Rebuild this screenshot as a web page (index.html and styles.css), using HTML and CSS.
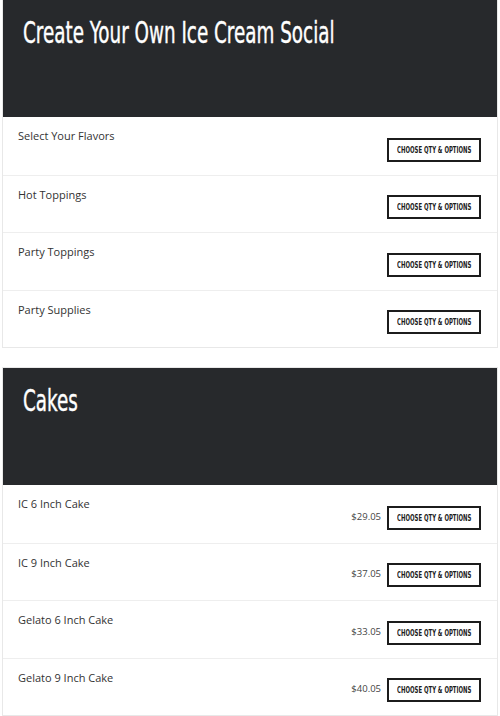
FILE: index.html
```html
<!DOCTYPE html>
<html>
<head>
<meta charset="utf-8">
<link rel="stylesheet" href="styles.css">
</head>
<body>
<div class="page">
  <section class="card">
    <header class="card-head"><h2 class="card-title"><span class="squeeze">Create Your Own Ice Cream Social</span></h2></header>
    <div class="row"><div class="row-name">Select Your Flavors</div><div class="row-act"><button class="btn"><span class="btn-label">CHOOSE QTY &amp; OPTIONS</span></button></div></div>
    <div class="row"><div class="row-name">Hot Toppings</div><div class="row-act"><button class="btn"><span class="btn-label">CHOOSE QTY &amp; OPTIONS</span></button></div></div>
    <div class="row"><div class="row-name">Party Toppings</div><div class="row-act"><button class="btn"><span class="btn-label">CHOOSE QTY &amp; OPTIONS</span></button></div></div>
    <div class="row"><div class="row-name">Party Supplies</div><div class="row-act"><button class="btn"><span class="btn-label">CHOOSE QTY &amp; OPTIONS</span></button></div></div>
  </section>
  <section class="card">
    <header class="card-head"><h2 class="card-title"><span class="squeeze">Cakes</span></h2></header>
    <div class="row"><div class="row-name">IC 6 Inch Cake</div><div class="row-act"><span class="price">$29.05</span><button class="btn"><span class="btn-label">CHOOSE QTY &amp; OPTIONS</span></button></div></div>
    <div class="row"><div class="row-name">IC 9 Inch Cake</div><div class="row-act"><span class="price">$37.05</span><button class="btn"><span class="btn-label">CHOOSE QTY &amp; OPTIONS</span></button></div></div>
    <div class="row"><div class="row-name">Gelato 6 Inch Cake</div><div class="row-act"><span class="price">$33.05</span><button class="btn"><span class="btn-label">CHOOSE QTY &amp; OPTIONS</span></button></div></div>
    <div class="row"><div class="row-name">Gelato 9 Inch Cake</div><div class="row-act"><span class="price">$40.05</span><button class="btn"><span class="btn-label">CHOOSE QTY &amp; OPTIONS</span></button></div></div>
  </section>
</div>
</body>
</html>
```
FILE: styles.css
```css
html, body { margin: 0; padding: 0; background: #fff; }
body { font-family: "Open Sans", "Liberation Sans", sans-serif; color: #333; }
.page { padding: 0 2px; display: flex; flex-direction: column; gap: 19px; }
.card { border: 1px solid #e8e8e8; border-top: none; background: #fff; }
.card + .card { border-top: 1px solid #e8e8e8; }
.card-head { background: #27292c; height: 117px; box-sizing: border-box; padding: 15px 20px 0; }
.card-title { margin: 0; color: #fff; font-family: "DejaVu Sans Condensed", "DejaVu Sans", sans-serif; font-weight: normal; font-size: 30px; line-height: 36px; white-space: nowrap; }
.squeeze { display: inline-block; transform: scaleX(0.68); transform-origin: left center; -webkit-text-stroke: 0.4px #fff; }
.row { display: flex; justify-content: space-between; align-items: flex-start; padding: 11px 16px 13px 15px; border-top: 1px solid #eeeeee; height: 57.5px; box-sizing: border-box; }
.card-head + .row { border-top: none; }
.row-name { font-size: 11px; line-height: 16px; color: #333; }
.row-act { display: flex; align-items: center; gap: 6px; align-self: flex-end; }
.price { font-size: 9.5px; color: #444; margin-top: -3px; }
.btn { box-sizing: border-box; width: 94px; height: 24px; border: 2px solid #1c1c1c; background: #fff; color: #1c1c1c; padding: 0; display: flex; align-items: center; justify-content: center; overflow: visible; }
.btn-label { display: inline-block; white-space: nowrap; color: #1c1c1c; font-family: "DejaVu Sans Condensed", "DejaVu Sans", sans-serif; font-weight: bold; font-size: 9px; transform: scaleX(0.66); transform-origin: center; flex: none; }
```
